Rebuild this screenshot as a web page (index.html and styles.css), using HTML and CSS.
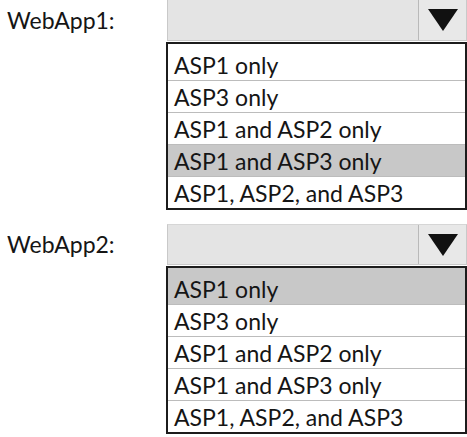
FILE: index.html
```html
<!DOCTYPE html>
<html>
<head>
<meta charset="utf-8">
<link rel="stylesheet" href="styles.css">
</head>
<body>
<div class="form">
  <div class="field field-first">
    <div class="label">WebApp1:</div>
    <div class="select">
      <div class="select-value"></div>
      <div class="select-btn">
        <svg width="30" height="22" viewBox="0 0 30 22"><polygon points="0,0 30,0 15,22" fill="#111"/></svg>
      </div>
    </div>
    <ul class="list">
      <li class="opt opt-first">ASP1 only</li>
      <li class="opt">ASP3 only</li>
      <li class="opt">ASP1 and ASP2 only</li>
      <li class="opt sel">ASP1 and ASP3 only</li>
      <li class="opt">ASP1, ASP2, and ASP3</li>
    </ul>
  </div>
  <div class="field field-second">
    <div class="label">WebApp2:</div>
    <div class="select">
      <div class="select-value"></div>
      <div class="select-btn">
        <svg width="30" height="22" viewBox="0 0 30 22"><polygon points="0,0 30,0 15,22" fill="#111"/></svg>
      </div>
    </div>
    <ul class="list">
      <li class="opt opt-first sel">ASP1 only</li>
      <li class="opt">ASP3 only</li>
      <li class="opt">ASP1 and ASP2 only</li>
      <li class="opt">ASP1 and ASP3 only</li>
      <li class="opt">ASP1, ASP2, and ASP3</li>
    </ul>
  </div>
</div>
</body>
</html>
```

FILE: styles.css
```css
* { box-sizing: border-box; }
html, body { margin: 0; padding: 0; background: #fff; }
body {
  font-family: Lato, "Liberation Sans", sans-serif;
  font-size: 23px;
  color: #151515;
  width: 467px;
  height: 437px;
  overflow: hidden;
}
.form {
  display: flex;
  flex-direction: column;
  gap: 14px;
}
.field {
  display: grid;
  grid-template-columns: 166px 301px;
  grid-template-rows: 41px auto;
}
.label {
  grid-column: 1;
  grid-row: 1;
  align-self: center;
  padding-left: 7px;
  line-height: 1;
}
.select {
  grid-column: 2;
  grid-row: 1;
  margin-left: 1px;
  display: flex;
  background: #e4e4e4;
  border: 1px solid #c9c9c9;
  border-top-color: #d6d6d6;
}
.field-first .select { border-top: none; }
.select-value { flex: 1; }
.select-btn {
  width: 48px;
  border-left: 1px solid #b9b9b9;
  background: #e8e8e8;
  display: flex;
  align-items: center;
  justify-content: center;
  padding-left: 1px;
}
.list {
  grid-column: 2;
  grid-row: 2;
  list-style: none;
  margin: 1px 0 0;
  padding: 0;
  border: 2px solid #1c1c1c;
  width: 301px;
}
.opt {
  height: 32px;
  line-height: 32px;
  padding-left: 6px;
  border-top: 1px solid #bcbcbc;
  padding-bottom: 4px;
}
.opt-first {
  border-top: none;
  height: 36px;
  line-height: 30px;
  padding-top: 6px;
  padding-bottom: 0;
}
.sel { background: #c8c8c8; }
```
